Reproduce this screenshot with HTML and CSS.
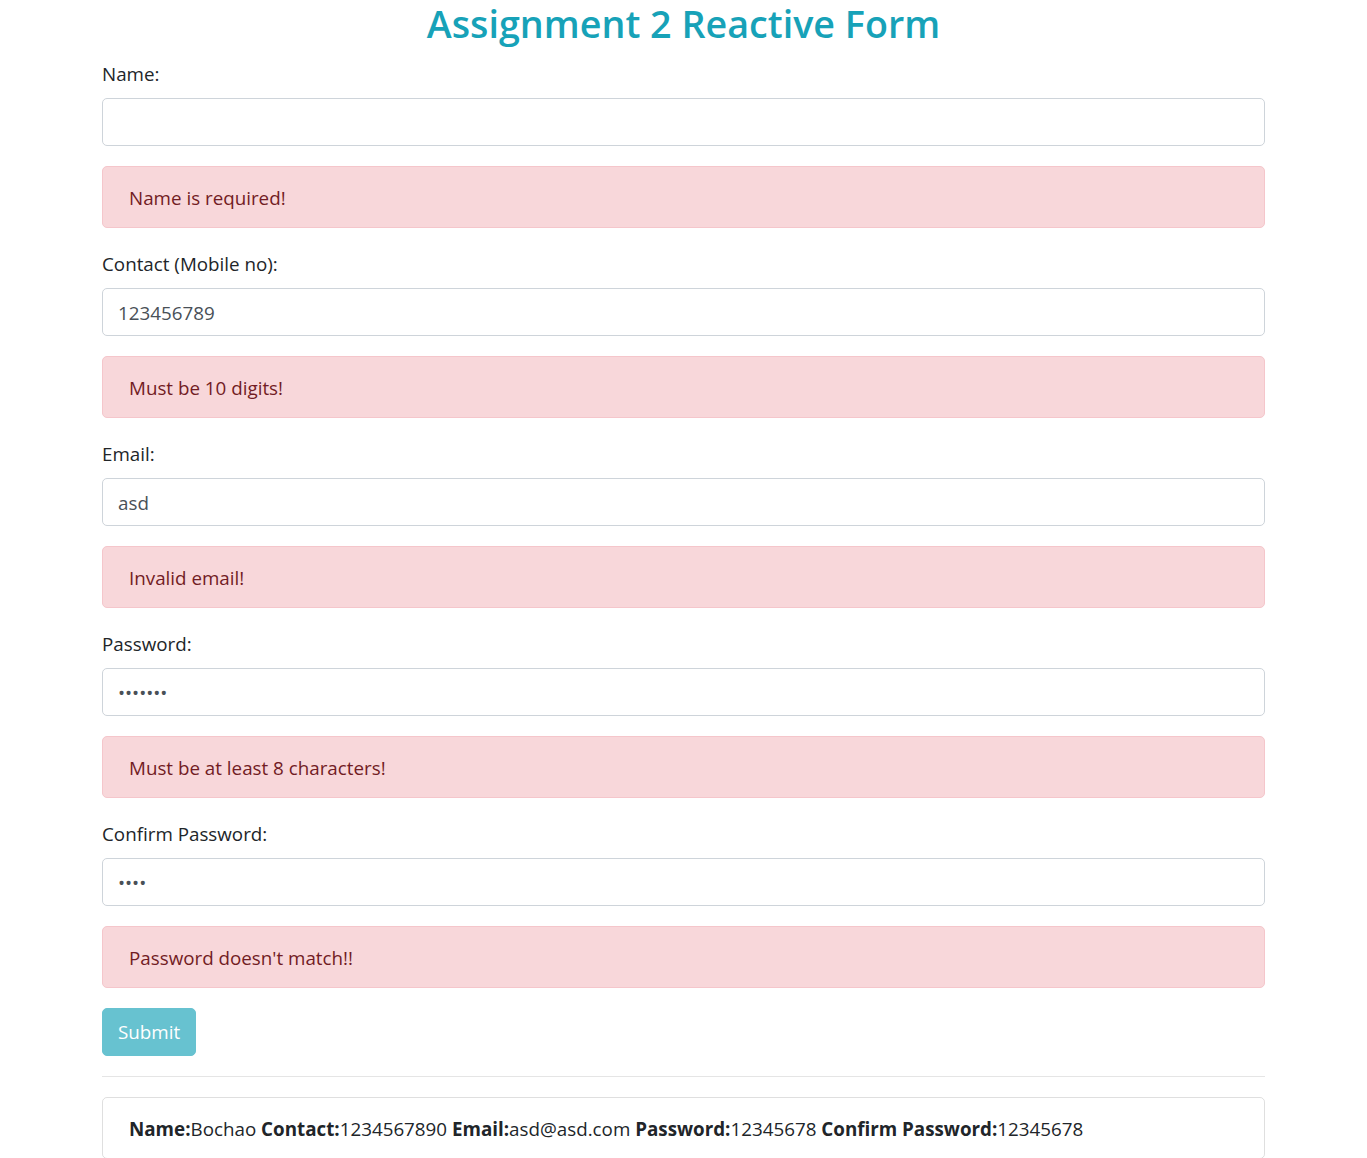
FILE: index.html
```html
<!DOCTYPE html>
<html>
<head>
<meta charset="utf-8">
<link rel="stylesheet" href="styles.css">
</head>
<body>
<div class="container">
  <h2 class="title">Assignment 2 Reactive Form</h2>
  <form class="form">
    <div class="group">
      <label class="label">Name:</label>
      <input class="input" type="text" value="">
    </div>
    <div class="alert">Name is required!</div>
    <div class="group">
      <label class="label">Contact (Mobile no):</label>
      <input class="input" type="text" value="123456789">
    </div>
    <div class="alert">Must be 10 digits!</div>
    <div class="group">
      <label class="label">Email:</label>
      <input class="input" type="text" value="asd">
    </div>
    <div class="alert">Invalid email!</div>
    <div class="group">
      <label class="label">Password:</label>
      <input class="input" type="password" value="1234567">
    </div>
    <div class="alert">Must be at least 8 characters!</div>
    <div class="group">
      <label class="label">Confirm Password:</label>
      <input class="input" type="password" value="1234">
    </div>
    <div class="alert">Password doesn't match!!</div>
    <button class="btn" type="button" disabled>Submit</button>
  </form>
  <hr class="rule">
  <div class="result"><b>Name:</b>Bochao <b>Contact:</b>1234567890 <b>Email:</b>asd@asd.com <b>Password:</b>12345678 <b>Confirm Password:</b>12345678</div>
</div>
</body>
</html>
```

FILE: styles.css
```css
* { box-sizing: border-box; }
html, body { margin: 0; padding: 0; }
body {
  font-family: "Open Sans", "Noto Sans", sans-serif;
  font-size: 18.8px;
  line-height: 30px;
  color: #212529;
  background: #fff;
}
.container {
  width: 1163px;
  margin: 0 auto;
}
.title {
  margin: 0 0 10px;
  height: 48px;
  font-size: 37.7px;
  line-height: 48px;
  font-weight: 600;
  color: #17a2b8;
  text-align: center;
}
.form { display: flex; flex-direction: column; align-items: stretch; }
.group { display: flex; flex-direction: column; margin-bottom: 20px; }
.label { display: block; margin-bottom: 10px; line-height: 30px; padding-top: 1px; height: 30px; }
.input {
  display: block;
  width: 100%;
  height: 48px;
  padding: 8px 15px 6px;
  font-family: inherit;
  font-size: 18.8px;
  line-height: 30px;
  color: #495057;
  background: #fff;
  border: 1px solid #ced4da;
  border-radius: 5px;
  outline: none;
}
.alert {
  padding: 16px 25px 14px 26px;
  margin-bottom: 20px;
  background: #f8d7da;
  border: 1px solid #f5c6cb;
  border-radius: 5px;
  color: #721c24;
  line-height: 30px;
}
.btn {
  align-self: flex-start;
  height: 48px;
  padding: 8px 15px;
  font-family: inherit;
  font-size: 18.8px;
  line-height: 30px;
  color: #fff;
  background: #17a2b8;
  border: 1px solid #17a2b8;
  border-radius: 5px;
  opacity: 0.65;
}
.rule {
  margin: 20px 0;
  border: 0;
  border-top: 1px solid rgba(0,0,0,0.1);
}
.result {
  padding: 16px 25px 14px 26px;
  border: 1px solid rgba(0,0,0,0.125);
  border-radius: 5px;
  line-height: 30px;
}
.result b { font-weight: 700; }
```
